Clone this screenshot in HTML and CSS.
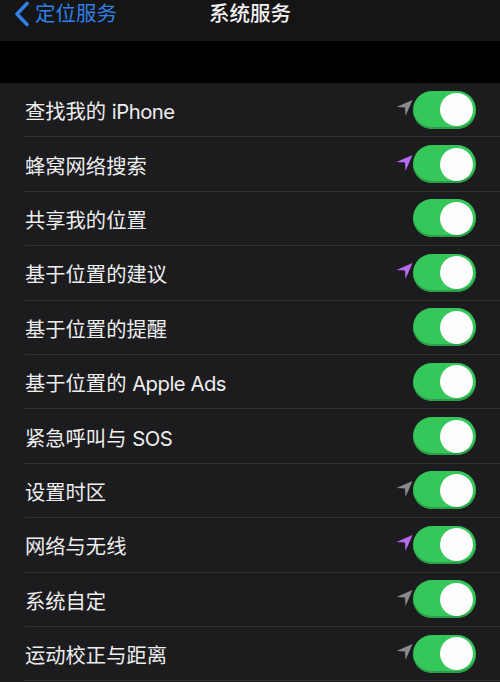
FILE: index.html
```html
<!DOCTYPE html>
<html lang="zh-CN">
<head>
<meta charset="utf-8">
<link rel="stylesheet" href="styles.css">
</head>
<body>
<header class="nav">
  <div class="back">
    <svg class="chev" width="16" height="26" viewBox="0 0 16 26"><path d="M13 2.5 L3 13 L13 23.5" fill="none" stroke="#2f7fe6" stroke-width="3.6" stroke-linecap="round" stroke-linejoin="round"/></svg>
    <span class="back-text">定位服务</span>
  </div>
  <div class="title">系统服务</div>
</header>
<div class="gap"></div>
<main class="list">
  <div class="row"><div class="inner"><span class="label">查找我的 <span class="lat">iPhone</span></span><span class="right"><svg class="arrow gray" viewBox="0 0 16 16"><path d="M16 0 L0 7 L8.5 7.5 L9 16 Z"/></svg><span class="toggle"><span class="knob"></span></span></span></div></div>
  <div class="row"><div class="inner"><span class="label">蜂窝网络搜索</span><span class="right"><svg class="arrow purple" viewBox="0 0 16 16"><path d="M16 0 L0 7 L8.5 7.5 L9 16 Z"/></svg><span class="toggle"><span class="knob"></span></span></span></div></div>
  <div class="row"><div class="inner"><span class="label">共享我的位置</span><span class="right"><span class="toggle"><span class="knob"></span></span></span></div></div>
  <div class="row"><div class="inner"><span class="label">基于位置的建议</span><span class="right"><svg class="arrow purple" viewBox="0 0 16 16"><path d="M16 0 L0 7 L8.5 7.5 L9 16 Z"/></svg><span class="toggle"><span class="knob"></span></span></span></div></div>
  <div class="row"><div class="inner"><span class="label">基于位置的提醒</span><span class="right"><span class="toggle"><span class="knob"></span></span></span></div></div>
  <div class="row"><div class="inner"><span class="label">基于位置的 <span class="lat">Apple Ads</span></span><span class="right"><span class="toggle"><span class="knob"></span></span></span></div></div>
  <div class="row"><div class="inner"><span class="label">紧急呼叫与 <span class="lat">SOS</span></span><span class="right"><span class="toggle"><span class="knob"></span></span></span></div></div>
  <div class="row"><div class="inner"><span class="label">设置时区</span><span class="right"><svg class="arrow gray" viewBox="0 0 16 16"><path d="M16 0 L0 7 L8.5 7.5 L9 16 Z"/></svg><span class="toggle"><span class="knob"></span></span></span></div></div>
  <div class="row"><div class="inner"><span class="label">网络与无线</span><span class="right"><svg class="arrow purple" viewBox="0 0 16 16"><path d="M16 0 L0 7 L8.5 7.5 L9 16 Z"/></svg><span class="toggle"><span class="knob"></span></span></span></div></div>
  <div class="row"><div class="inner"><span class="label">系统自定</span><span class="right"><svg class="arrow gray" viewBox="0 0 16 16"><path d="M16 0 L0 7 L8.5 7.5 L9 16 Z"/></svg><span class="toggle"><span class="knob"></span></span></span></div></div>
  <div class="row"><div class="inner"><span class="label">运动校正与距离</span><span class="right"><svg class="arrow gray" viewBox="0 0 16 16"><path d="M16 0 L0 7 L8.5 7.5 L9 16 Z"/></svg><span class="toggle"><span class="knob"></span></span></span></div></div>
</main>
</body>
</html>
```
FILE: styles.css
```css
* { box-sizing: border-box; }
html, body { margin: 0; padding: 0; }
body {
  width: 500px;
  height: 682px;
  overflow: hidden;
  background: #1c1c1e;
  font-family: Inter, "Noto Sans CJK SC", sans-serif;
  color: #f0f0f0;
}
.nav {
  height: 41px;
  background: #151515;
  position: relative;
  display: flex;
  align-items: flex-start;
  justify-content: center;
}
.back {
  position: absolute;
  left: 14px;
  top: 1px;
  display: flex;
  align-items: center;
  gap: 5px;
}
.chev { display: block; }
.back-text {
  color: #2f7fe6;
  font-size: 20.5px;
  line-height: 26px;
}
.title {
  font-size: 20.5px;
  line-height: 28px;
  color: #f2f2f2;
  font-weight: 500;
}
.gap {
  height: 42px;
  background: #000;
}
.list { background: #1c1c1e; }
.row { padding-left: 25px; }
.inner {
  height: 54.4px;
  border-bottom: 1px solid #323234;
  display: flex;
  align-items: center;
  justify-content: space-between;
  padding-right: 24px;
}
.label {
  font-size: 20.3px;
  color: #eeeeee;
  padding-top: 1px;
}
.lat { letter-spacing: -0.5px; }
.right {
  display: flex;
  align-items: center;
}
.arrow {
  width: 17px;
  height: 16px;
  margin-top: -3px;
}
.arrow.gray { fill: #8a8a8e; }
.arrow.purple { fill: #b86af0; }
.toggle {
  width: 63px;
  height: 38px;
  border-radius: 19px;
  background: #35c759;
  box-shadow: inset 0 -2px 0 #2a9e48;
  display: flex;
  align-items: center;
  justify-content: flex-end;
  padding-right: 3px;
}
.knob {
  width: 33px;
  height: 33px;
  border-radius: 50%;
  background: #fdfdfd;
}
```
